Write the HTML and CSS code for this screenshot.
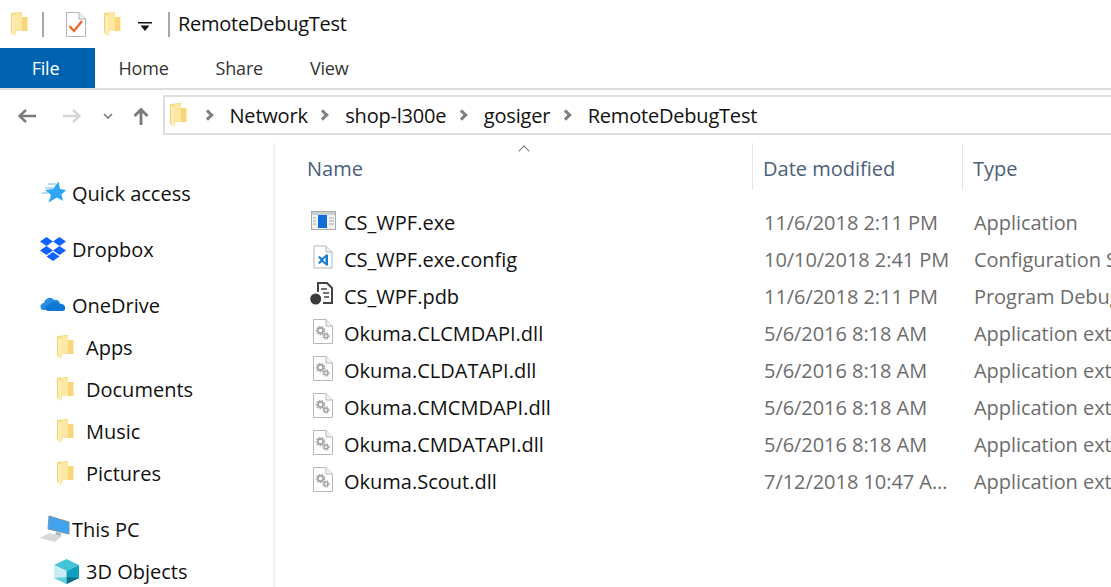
FILE: index.html
```html
<!DOCTYPE html>
<html lang="en">
<head>
    <meta charset="UTF-8">
    <title>RemoteDebugTest</title>
    <link rel="stylesheet" href="styles.css">
</head>
<body>
    <svg class="defs" width="0" height="0">
        <symbol id="folder" viewBox="0 0 17 24">
            <path d="M0 1 L11 0 V5 H16.500 V19 H5 L4 24 L0 21 Z" fill="#f7d777"/>
            <path d="M4 1 H11 V19 H4 Z" fill="#fde8a3"/>
            <path d="M0 1 L4 4 V24 L0 20.500 Z" fill="#fceeb5"/>
            <path d="M0 1 L1 1 V21 L0 20.500 Z" fill="#f4cf6c"/>
        </symbol>
        <symbol id="dll" viewBox="0 0 20 25">
            <path d="M0.500 0.500 H13 L19.500 7 V24.500 H0.500 Z" fill="#fff" stroke="#b8b8b8"/>
            <path d="M13 0.500 V7 H19.500" fill="#f0f0f0" stroke="#b8b8b8"/>
            <circle cx="7.500" cy="11.500" r="2.600" fill="none" stroke="#a2a2a2" stroke-width="1.600"/>
            <circle cx="7.500" cy="11.500" r="4" fill="none" stroke="#a2a2a2" stroke-width="1.600" stroke-dasharray="1.500 1.300"/>
            <circle cx="13" cy="17" r="1.800" fill="none" stroke="#a8a8a8" stroke-width="1.400"/>
            <circle cx="13" cy="17" r="3" fill="none" stroke="#a8a8a8" stroke-width="1.400" stroke-dasharray="1.300 1.100"/>
        </symbol>
    </svg>

    <header class="titlebar">
        <svg class="folder-small"><use href="#folder"/></svg>
        <span class="bar-sep"></span>
        <svg class="check-icon" viewBox="0 0 20 25">
            <path d="M0.500 0.500 H13 L19.500 7 V24.500 H0.500 Z" fill="#fff" stroke="#b4b4b4"/>
            <path d="M13 0.500 V7 H19.500" fill="#eee" stroke="#b4b4b4"/>
            <path d="M3.500 14 L8 19 L16 9" fill="none" stroke="#ef632a" stroke-width="2.200"/>
        </svg>
        <svg class="folder-small qa-folder"><use href="#folder"/></svg>
        <svg class="qa-arrow" viewBox="0 0 14 9">
            <rect x="0" y="0" width="14" height="1.500" fill="#111"/>
            <path d="M2.500 3.500 H11.500 L7 9 Z" fill="#111"/>
        </svg>
        <span class="bar-sep title-sep"></span>
        <h1 class="title">RemoteDebugTest</h1>
    </header>

    <nav class="tabs">
        <a class="tab tab-file">File</a>
        <a class="tab">Home</a>
        <a class="tab">Share</a>
        <a class="tab">View</a>
    </nav>

    <div class="addressrow">
        <div class="navbtns">
            <svg class="nav-arrow" viewBox="0 0 20 16"><path d="M19 8 H3 M9 2 L2.500 8 L9 14" fill="none" stroke="#7a7a7a" stroke-width="2.400"/></svg>
            <svg class="nav-arrow fwd" viewBox="0 0 20 16"><path d="M1 8 H17 M11 2 L17.500 8 L11 14" fill="none" stroke="#d6d6d6" stroke-width="2.400"/></svg>
            <svg class="nav-down" viewBox="0 0 10 6"><path d="M1 1 L5 5 L9 1" fill="none" stroke="#7a7a7a" stroke-width="1.600"/></svg>
            <svg class="nav-up" viewBox="0 0 16 18"><path d="M8 18 V3 M1.500 9 L8 2.500 L14.500 9" fill="none" stroke="#7a7a7a" stroke-width="2.800"/></svg>
        </div>
        <div class="addressbox">
            <svg class="folder-small"><use href="#folder"/></svg>
            <span class="chev"></span><span class="crumb">Network</span>
            <span class="chev"></span><span class="crumb">shop-l300e</span>
            <span class="chev"></span><span class="crumb">gosiger</span>
            <span class="chev"></span><span class="crumb">RemoteDebugTest</span>
        </div>
    </div>

    <div class="content">
        <aside class="sidebar">
            <div class="group">
                <div class="item">
                    <svg class="side-icon" viewBox="4 3 26 24">
                        <path d="M12 6 H20 M9 10 H17 M6 15 H12" stroke="#9fd2f5" stroke-width="1.400"/>
                        <path d="M22.500 3.500 L24 11 L30 12 L25.500 16.500 L27 23 L21 19.500 L12.500 24.500 L15 17 L9 12 L17 11 Z" fill="#2fa6f4"/>
                    </svg>
                    <span>Quick access</span>
                </div>
            </div>
            <div class="group">
                <div class="item">
                    <svg class="side-icon dropbox" viewBox="0 0 28 26">
                        <path d="M7.500 1 L14 5.500 L7.500 10 L1 5.500 Z M20.500 1 L27 5.500 L20.500 10 L14 5.500 Z M7.500 10 L14 14.500 L7.500 19 L1 14.500 Z M20.500 10 L27 14.500 L20.500 19 L14 14.500 Z M14 16 L20.500 20.500 L14 25 L7.500 20.500 Z" fill="#0f62fe"/>
                    </svg>
                    <span>Dropbox</span>
                </div>
            </div>
            <div class="group">
                <div class="item">
                    <svg class="side-icon onedrive" viewBox="0 0 26 16">
                        <path d="M3 15 C-1 14 0 8 4 8 C5 3 11 1 14 5 C17 4 20 6 20 9 L10 15 Z" fill="#2a8ee0"/>
                        <path d="M8 16 C4 15 5 10 9 10 C11 6 17 6 19 9 C23 8 26 11 25 14 C25 15 24 16 23 16 Z" fill="#0f78d4"/>
                    </svg>
                    <span>OneDrive</span>
                </div>
                <div class="item sub"><svg class="folder-side"><use href="#folder"/></svg><span>Apps</span></div>
                <div class="item sub"><svg class="folder-side"><use href="#folder"/></svg><span>Documents</span></div>
                <div class="item sub"><svg class="folder-side"><use href="#folder"/></svg><span>Music</span></div>
                <div class="item sub"><svg class="folder-side"><use href="#folder"/></svg><span>Pictures</span></div>
            </div>
            <div class="group">
                <div class="item">
                    <svg class="side-icon pc" viewBox="0 0 30 28">
                        <path d="M16 17 L21 18 V22 L15 21 Z" fill="#a8b4bc"/>
                        <path d="M9 1 L29 7 V19 L8 14 Z" fill="#3fa3ef" stroke="#7f929f"/>
                        <path d="M9 18 L22 21 L15 27 L0 23 Z" fill="#d5d9dc"/>
                    </svg>
                    <span>This PC</span>
                </div>
                <div class="item sub">
                    <svg class="cube" viewBox="0 0 25 25">
                        <path d="M12.500 0 L25 6 L12.500 12 L0 6 Z" fill="#45c4d8"/>
                        <path d="M0 6 L12.500 12 V25 L0 19 Z" fill="#c8eef2"/>
                        <path d="M12.500 12 L25 6 V19 L12.500 25 Z" fill="#12a0c0"/>
                        <path d="M12.500 18 L25 19 L12.500 25 Z" fill="#0d6d8c"/>
                        <path d="M12.500 18 L0 19 L12.500 25 Z" fill="#5cd0dd"/>
                    </svg>
                    <span>3D Objects</span>
                </div>
            </div>
        </aside>

        <main class="files">
            <span class="sort-caret"></span>
            <div class="row header">
                <div class="col col-name">Name</div>
                <div class="col col-date">Date modified</div>
                <div class="col col-type">Type</div>
            </div>
            <div class="list">
                <div class="row file">
                    <div class="col col-name">
                        <svg class="file-icon exe" viewBox="0 0 25 19">
                            <rect x="0.500" y="0.500" width="24" height="18" fill="#f3f3f3" stroke="#aaa"/>
                            <rect x="1" y="1" width="23" height="3" fill="#c9ced3"/>
                            <rect x="7" y="4" width="9" height="13" fill="#0f6fd6"/>
                            <path d="M2 7 H5 M2 10 H5 M2 13 H5 M18 7 H23 M18 10 H23 M18 13 H23" stroke="#a8a8a8"/>
                        </svg>
                        CS_WPF.exe
                    </div>
                    <div class="col col-date">11/6/2018 2:11 PM</div>
                    <div class="col col-type">Application</div>
                </div>
                <div class="row file">
                    <div class="col col-name">
                        <svg class="file-icon" viewBox="0 0 26 24">
                            <path d="M4 1 H16 L22 7 V23 H4 Z" fill="#fff" stroke="#b4b4b4"/>
                            <path d="M16 1 V7 H22" fill="#f0f0f0" stroke="#b4b4b4"/>
                            <path d="M17 9 L12 13 L9.500 11 L8 12 L10.500 15 L8 18 L9.500 19 L12 17 L17 21 L18 20 V10 Z M15.500 12.500 V17.500 L13 15 Z" fill="#1a7fd0" fill-rule="evenodd"/>
                        </svg>
                        CS_WPF.exe.config
                    </div>
                    <div class="col col-date">10/10/2018 2:41 PM</div>
                    <div class="col col-type">Configuration Settings</div>
                </div>
                <div class="row file">
                    <div class="col col-name">
                        <svg class="file-icon" viewBox="0 0 26 24">
                            <path d="M8 10 V1 H17 L22 6 V21 H13" fill="#fff" stroke="#444" stroke-width="2"/>
                            <path d="M11 7 H17 M13 11 H19 M14 15 H19" stroke="#444" stroke-width="1.500"/>
                            <circle cx="5.700" cy="17" r="5.500" fill="#3a3a3a"/>
                        </svg>
                        CS_WPF.pdb
                    </div>
                    <div class="col col-date">11/6/2018 2:11 PM</div>
                    <div class="col col-type">Program Debug Database</div>
                </div>
                <div class="row file">
                    <div class="col col-name"><svg class="file-icon dll"><use href="#dll"/></svg>Okuma.CLCMDAPI.dll</div>
                    <div class="col col-date">5/6/2016 8:18 AM</div>
                    <div class="col col-type">Application extension</div>
                </div>
                <div class="row file">
                    <div class="col col-name"><svg class="file-icon dll"><use href="#dll"/></svg>Okuma.CLDATAPI.dll</div>
                    <div class="col col-date">5/6/2016 8:18 AM</div>
                    <div class="col col-type">Application extension</div>
                </div>
                <div class="row file">
                    <div class="col col-name"><svg class="file-icon dll"><use href="#dll"/></svg>Okuma.CMCMDAPI.dll</div>
                    <div class="col col-date">5/6/2016 8:18 AM</div>
                    <div class="col col-type">Application extension</div>
                </div>
                <div class="row file">
                    <div class="col col-name"><svg class="file-icon dll"><use href="#dll"/></svg>Okuma.CMDATAPI.dll</div>
                    <div class="col col-date">5/6/2016 8:18 AM</div>
                    <div class="col col-type">Application extension</div>
                </div>
                <div class="row file">
                    <div class="col col-name"><svg class="file-icon dll"><use href="#dll"/></svg>Okuma.Scout.dll</div>
                    <div class="col col-date">7/12/2018 10:47 A...</div>
                    <div class="col col-type">Application extension</div>
                </div>
            </div>
        </main>
    </div>
</body>
</html>
```

FILE: styles.css
```css
html, body {
    margin: 0;
    height: 587px;
    overflow: hidden;
}
body {
    width: 1111px;
    background: #fff;
    color: #111;
    font-family: "Open Sans", "Noto Sans", Arial, sans-serif;
    font-size: 20px;
}
.defs {
    position: absolute;
}
.titlebar {
    height: 48px;
    display: flex;
    align-items: center;
    padding-left: 11px;
    box-sizing: border-box;
}
.folder-small {
    width: 17px;
    height: 24px;
    flex: none;
}
.bar-sep {
    width: 2px;
    height: 25px;
    background: #a8a8a8;
    margin-left: 14px;
}
.check-icon {
    width: 20px;
    height: 25px;
    margin-left: 22px;
}
.qa-folder {
    margin-left: 18px;
}
.qa-arrow {
    width: 14px;
    height: 9px;
    margin-left: 17px;
    margin-top: 4px;
}
.title-sep {
    margin-left: 16px;
}
.title {
    margin: 0 0 2px 8px;
    font-size: 20px;
    font-weight: 400;
    letter-spacing: -0.25px;
}
.tabs {
    height: 40px;
    display: flex;
    border-bottom: 2px solid #dcdcdc;
}
.tab {
    display: flex;
    align-items: center;
    padding: 0 23.5px;
    font-size: 18px;
    letter-spacing: -0.2px;
    color: #333;
}
.tab-file {
    width: 95px;
    box-sizing: border-box;
    justify-content: center;
    padding: 0 4px 0 0;
    background: #0063b1;
    color: #fff;
}
.addressrow {
    height: 53px;
    display: flex;
    align-items: flex-start;
    padding-top: 5px;
    box-sizing: border-box;
}
.navbtns {
    width: 163px;
    height: 42px;
    display: flex;
    align-items: center;
    flex: none;
    padding-left: 17px;
    box-sizing: border-box;
}
.nav-arrow {
    width: 20px;
    height: 16px;
}
.nav-arrow.fwd {
    margin-left: 25px;
}
.nav-down {
    width: 10px;
    height: 6px;
    margin-left: 21px;
}
.nav-up {
    width: 16px;
    height: 18px;
    margin-left: 20px;
}
.addressbox {
    flex: 1;
    height: 40px;
    display: flex;
    align-items: center;
    padding-left: 5px;
    border: 2px solid #dedede;
    border-right: none;
    box-sizing: border-box;
    letter-spacing: -0.2px;
}
.addressbox .folder-small {
    margin-right: 5px;
}
.chev {
    width: 5px;
    height: 5px;
    border-top: 3px solid #808080;
    border-right: 3px solid #808080;
    transform: rotate(45deg);
    margin: 0 18px 0 11.5px;
    flex: none;
}
.content {
    display: flex;
    height: 444px;
}
.sidebar {
    width: 273px;
    flex: none;
    border-right: 2px solid #efefef;
    padding-top: 29px;
}
.group {
    margin-bottom: 14px;
}
.item {
    height: 42px;
    display: flex;
    align-items: center;
    padding-left: 40px;
    white-space: nowrap;
}
.side-icon {
    width: 26px;
    height: 24px;
    margin-right: 6px;
    flex: none;
}
.side-icon.dropbox {
    width: 28px;
    height: 26px;
    margin: 0 5px 0 -1px;
}
.side-icon.onedrive {
    margin-bottom: 4px;
}
.side-icon.pc {
    width: 30px;
    height: 28px;
    margin-right: 2px;
}
.item.sub {
    padding-left: 57px;
}
.folder-side {
    width: 17px;
    height: 24px;
    margin-right: 12px;
    flex: none;
}
.cube {
    width: 25px;
    height: 25px;
    margin: 0 7px 0 -3px;
    flex: none;
}
.files {
    flex: 1;
    position: relative;
    min-width: 0;
}
.sort-caret {
    position: absolute;
    left: 245px;
    top: 4px;
    width: 7px;
    height: 7px;
    border-top: 1px solid #777;
    border-left: 1px solid #777;
    transform: rotate(45deg);
}
.row {
    display: grid;
    grid-template-columns: 477px 210px minmax(0, 1fr);
    white-space: nowrap;
}
.header {
    height: 47px;
    margin-bottom: 14px;
    color: #4c607a;
}
.header .col {
    display: flex;
    align-items: center;
    padding: 4px 0 0 32px;
    box-sizing: border-box;
}
.header .col-date, .header .col-type {
    padding-left: 10px;
    border-left: 1px solid #e5e5e5;
}
.file {
    height: 37px;
    align-items: center;
}
.col-type {
    overflow: hidden;
}
.file .col-name {
    display: flex;
    align-items: center;
    padding-left: 35px;
}
.file .col-date, .file .col-type {
    padding-left: 12px;
    letter-spacing: -0.05px;
    color: #6d6d6d;
}
.file-icon {
    width: 26px;
    height: 24px;
    margin: 0 8px 5px 0;
    flex: none;
}
.file-icon.exe {
    width: 25px;
    height: 19px;
    margin-left: 1px;
}
.file-icon.dll {
    width: 20px;
    height: 25px;
    margin: 0 11px 5px 3px;
}
```
